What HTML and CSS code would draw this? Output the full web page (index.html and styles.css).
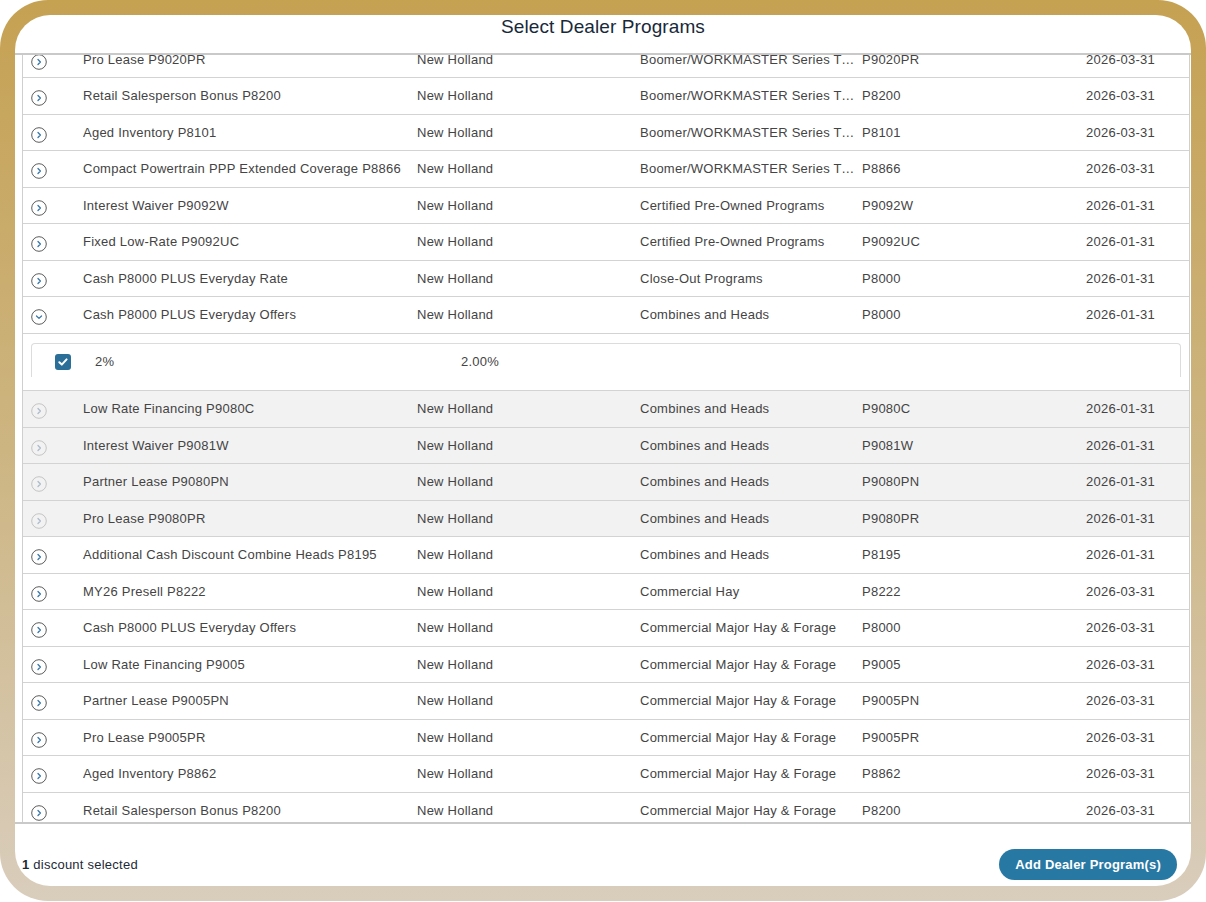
FILE: index.html
```html
<!DOCTYPE html>
<html lang="en">
<head>
<meta charset="utf-8">
<title>Select Dealer Programs</title>
<link rel="stylesheet" href="styles.css">
</head>
<body>
<div class="frame">
  <div class="panel">
    <header class="head"><h1 class="title">Select Dealer Programs</h1></header>
    <div class="scroller">
      <div class="table">
        <div class="row"><span class="ic"><svg viewBox="0 0 16 16"><circle cx="8" cy="8" r="7.3"/><path class="chev" d="M7 5.5 9.4 8 7 10.5"/></svg></span><span class="c">Pro Lease P9020PR</span><span class="c">New Holland</span><span class="c cat">Boomer/WORKMASTER Series Tractors</span><span class="c">P9020PR</span><span class="c">2026-03-31</span></div>
        <div class="row"><span class="ic"><svg viewBox="0 0 16 16"><circle cx="8" cy="8" r="7.3"/><path class="chev" d="M7 5.5 9.4 8 7 10.5"/></svg></span><span class="c">Retail Salesperson Bonus P8200</span><span class="c">New Holland</span><span class="c cat">Boomer/WORKMASTER Series Tractors</span><span class="c">P8200</span><span class="c">2026-03-31</span></div>
        <div class="row"><span class="ic"><svg viewBox="0 0 16 16"><circle cx="8" cy="8" r="7.3"/><path class="chev" d="M7 5.5 9.4 8 7 10.5"/></svg></span><span class="c">Aged Inventory P8101</span><span class="c">New Holland</span><span class="c cat">Boomer/WORKMASTER Series Tractors</span><span class="c">P8101</span><span class="c">2026-03-31</span></div>
        <div class="row"><span class="ic"><svg viewBox="0 0 16 16"><circle cx="8" cy="8" r="7.3"/><path class="chev" d="M7 5.5 9.4 8 7 10.5"/></svg></span><span class="c">Compact Powertrain PPP Extended Coverage P8866</span><span class="c">New Holland</span><span class="c cat">Boomer/WORKMASTER Series Tractors</span><span class="c">P8866</span><span class="c">2026-03-31</span></div>
        <div class="row"><span class="ic"><svg viewBox="0 0 16 16"><circle cx="8" cy="8" r="7.3"/><path class="chev" d="M7 5.5 9.4 8 7 10.5"/></svg></span><span class="c">Interest Waiver P9092W</span><span class="c">New Holland</span><span class="c cat">Certified Pre-Owned Programs</span><span class="c">P9092W</span><span class="c">2026-01-31</span></div>
        <div class="row"><span class="ic"><svg viewBox="0 0 16 16"><circle cx="8" cy="8" r="7.3"/><path class="chev" d="M7 5.5 9.4 8 7 10.5"/></svg></span><span class="c">Fixed Low-Rate P9092UC</span><span class="c">New Holland</span><span class="c cat">Certified Pre-Owned Programs</span><span class="c">P9092UC</span><span class="c">2026-01-31</span></div>
        <div class="row"><span class="ic"><svg viewBox="0 0 16 16"><circle cx="8" cy="8" r="7.3"/><path class="chev" d="M7 5.5 9.4 8 7 10.5"/></svg></span><span class="c">Cash P8000 PLUS Everyday Rate</span><span class="c">New Holland</span><span class="c cat">Close-Out Programs</span><span class="c">P8000</span><span class="c">2026-01-31</span></div>
        <div class="row"><span class="ic"><svg viewBox="0 0 16 16"><circle cx="8" cy="8" r="7.3"/><path class="chev" d="M5.5 7 8 9.4 10.5 7"/></svg></span><span class="c">Cash P8000 PLUS Everyday Offers</span><span class="c">New Holland</span><span class="c cat">Combines and Heads</span><span class="c">P8000</span><span class="c">2026-01-31</span></div>
        <div class="sub">
          <div class="subbox">
            <span class="check"><svg viewBox="0 0 16 16"><path d="M4.3 8.3 6.8 10.6 11.6 5.4"/></svg></span>
            <span class="c">2%</span>
            <span class="c">2.00%</span>
          </div>
        </div>
        <div class="row off"><span class="ic"><svg viewBox="0 0 16 16"><circle cx="8" cy="8" r="7.3"/><path class="chev" d="M7 5.5 9.4 8 7 10.5"/></svg></span><span class="c">Low Rate Financing P9080C</span><span class="c">New Holland</span><span class="c cat">Combines and Heads</span><span class="c">P9080C</span><span class="c">2026-01-31</span></div>
        <div class="row off"><span class="ic"><svg viewBox="0 0 16 16"><circle cx="8" cy="8" r="7.3"/><path class="chev" d="M7 5.5 9.4 8 7 10.5"/></svg></span><span class="c">Interest Waiver P9081W</span><span class="c">New Holland</span><span class="c cat">Combines and Heads</span><span class="c">P9081W</span><span class="c">2026-01-31</span></div>
        <div class="row off"><span class="ic"><svg viewBox="0 0 16 16"><circle cx="8" cy="8" r="7.3"/><path class="chev" d="M7 5.5 9.4 8 7 10.5"/></svg></span><span class="c">Partner Lease P9080PN</span><span class="c">New Holland</span><span class="c cat">Combines and Heads</span><span class="c">P9080PN</span><span class="c">2026-01-31</span></div>
        <div class="row off"><span class="ic"><svg viewBox="0 0 16 16"><circle cx="8" cy="8" r="7.3"/><path class="chev" d="M7 5.5 9.4 8 7 10.5"/></svg></span><span class="c">Pro Lease P9080PR</span><span class="c">New Holland</span><span class="c cat">Combines and Heads</span><span class="c">P9080PR</span><span class="c">2026-01-31</span></div>
        <div class="row"><span class="ic"><svg viewBox="0 0 16 16"><circle cx="8" cy="8" r="7.3"/><path class="chev" d="M7 5.5 9.4 8 7 10.5"/></svg></span><span class="c">Additional Cash Discount Combine Heads P8195</span><span class="c">New Holland</span><span class="c cat">Combines and Heads</span><span class="c">P8195</span><span class="c">2026-01-31</span></div>
        <div class="row"><span class="ic"><svg viewBox="0 0 16 16"><circle cx="8" cy="8" r="7.3"/><path class="chev" d="M7 5.5 9.4 8 7 10.5"/></svg></span><span class="c">MY26 Presell P8222</span><span class="c">New Holland</span><span class="c cat">Commercial Hay</span><span class="c">P8222</span><span class="c">2026-03-31</span></div>
        <div class="row"><span class="ic"><svg viewBox="0 0 16 16"><circle cx="8" cy="8" r="7.3"/><path class="chev" d="M7 5.5 9.4 8 7 10.5"/></svg></span><span class="c">Cash P8000 PLUS Everyday Offers</span><span class="c">New Holland</span><span class="c cat">Commercial Major Hay &amp; Forage</span><span class="c">P8000</span><span class="c">2026-03-31</span></div>
        <div class="row"><span class="ic"><svg viewBox="0 0 16 16"><circle cx="8" cy="8" r="7.3"/><path class="chev" d="M7 5.5 9.4 8 7 10.5"/></svg></span><span class="c">Low Rate Financing P9005</span><span class="c">New Holland</span><span class="c cat">Commercial Major Hay &amp; Forage</span><span class="c">P9005</span><span class="c">2026-03-31</span></div>
        <div class="row"><span class="ic"><svg viewBox="0 0 16 16"><circle cx="8" cy="8" r="7.3"/><path class="chev" d="M7 5.5 9.4 8 7 10.5"/></svg></span><span class="c">Partner Lease P9005PN</span><span class="c">New Holland</span><span class="c cat">Commercial Major Hay &amp; Forage</span><span class="c">P9005PN</span><span class="c">2026-03-31</span></div>
        <div class="row"><span class="ic"><svg viewBox="0 0 16 16"><circle cx="8" cy="8" r="7.3"/><path class="chev" d="M7 5.5 9.4 8 7 10.5"/></svg></span><span class="c">Pro Lease P9005PR</span><span class="c">New Holland</span><span class="c cat">Commercial Major Hay &amp; Forage</span><span class="c">P9005PR</span><span class="c">2026-03-31</span></div>
        <div class="row"><span class="ic"><svg viewBox="0 0 16 16"><circle cx="8" cy="8" r="7.3"/><path class="chev" d="M7 5.5 9.4 8 7 10.5"/></svg></span><span class="c">Aged Inventory P8862</span><span class="c">New Holland</span><span class="c cat">Commercial Major Hay &amp; Forage</span><span class="c">P8862</span><span class="c">2026-03-31</span></div>
        <div class="row"><span class="ic"><svg viewBox="0 0 16 16"><circle cx="8" cy="8" r="7.3"/><path class="chev" d="M7 5.5 9.4 8 7 10.5"/></svg></span><span class="c">Retail Salesperson Bonus P8200</span><span class="c">New Holland</span><span class="c cat">Commercial Major Hay &amp; Forage</span><span class="c">P8200</span><span class="c">2026-03-31</span></div>
      </div>
    </div>
    <footer class="foot">
      <span class="count"><b>1</b> discount selected</span>
      <button class="add" type="button">Add Dealer Program(s)</button>
    </footer>
  </div>
</div>
</body>
</html>
```
FILE: styles.css
```css
* { box-sizing: border-box; }
html, body { margin: 0; padding: 0; background: #ffffff; }
body {
  font-family: "Liberation Sans", Arial, sans-serif;
  font-size: 13px;
  letter-spacing: 0.24px;
  color: #444444;
}
.frame {
  width: 1206px;
  height: 901px;
  padding: 15px;
  border-radius: 48px;
  background: linear-gradient(180deg, #c5a152 0%, #cdb582 50%, #d9cdbc 100%);
}
.panel {
  height: 871px;
  background: #ffffff;
  border-radius: 35px;
  display: flex;
  flex-direction: column;
  overflow: hidden;
}
.head {
  height: 40px;
  flex: none;
  border-bottom: 2px solid #c9c9c9;
  text-align: center;
}
.title {
  margin: 0;
  font-size: 19px;
  font-weight: 400;
  letter-spacing: 0.1px;
  line-height: 23px;
  color: #18293a;
}
.scroller {
  height: 767px;
  flex: none;
  overflow: hidden;
}
.table {
  margin: -13.5px 1px 0 7px;
  border-left: 1px solid #cfcfcf;
  border-right: 1px solid #cfcfcf;
}
.row {
  display: grid;
  grid-template-columns: 60px 334px 223px 222px 224px 1fr;
  align-items: center;
  height: 36.5px;
  border-bottom: 1px solid #d3d3d3;
}
.row.off { background: #f2f2f2; }
.c {
  white-space: nowrap;
  overflow: hidden;
}
.cat {
  text-overflow: ellipsis;
  padding-right: 5px;
}
.ic {
  display: flex;
  padding-left: 8px;
  padding-top: 5px;
}
.ic svg {
  width: 16px;
  height: 16px;
  fill: none;
}
.ic circle { stroke: #5c5c5c; stroke-width: 1; }
.ic .chev { stroke: #3a78a9; stroke-width: 1.3; stroke-linecap: round; stroke-linejoin: round; }
.row.off .ic circle { stroke: #c4c4c4; }
.row.off .ic .chev { stroke: #aebccb; }
.sub {
  height: 57.5px;
  padding: 9px 8px 0 8px;
  border-bottom: 1px solid #d3d3d3;
}
.subbox {
  height: 34px;
  border: 1px solid #dcdcdc;
  border-bottom: none;
  border-radius: 4px 4px 0 0;
  display: grid;
  grid-template-columns: 16px 342px 1fr;
  column-gap: 24px;
  align-items: center;
  padding-left: 23px;
  padding-top: 3px;
}
.check {
  width: 16px;
  height: 16px;
  border-radius: 3px;
  background: #2b6e98;
  display: flex;
}
.check svg {
  width: 16px;
  height: 16px;
  fill: none;
  stroke: #ffffff;
  stroke-width: 2;
  stroke-linecap: round;
  stroke-linejoin: round;
}
.foot {
  height: 64px;
  flex: none;
  border-top: 2px solid #c9c9c9;
  display: flex;
  align-items: center;
  justify-content: space-between;
  padding: 24px 14px 6px 7px;
}
.count { color: #1d2a36; }
.count b { font-weight: 700; }
.add {
  height: 31px;
  padding: 0 16px;
  border: none;
  border-radius: 16px;
  background: #2878a4;
  color: #ffffff;
  font-family: "Liberation Sans", Arial, sans-serif;
  font-size: 13px;
  font-weight: 700;
  letter-spacing: 0.2px;
}
```
